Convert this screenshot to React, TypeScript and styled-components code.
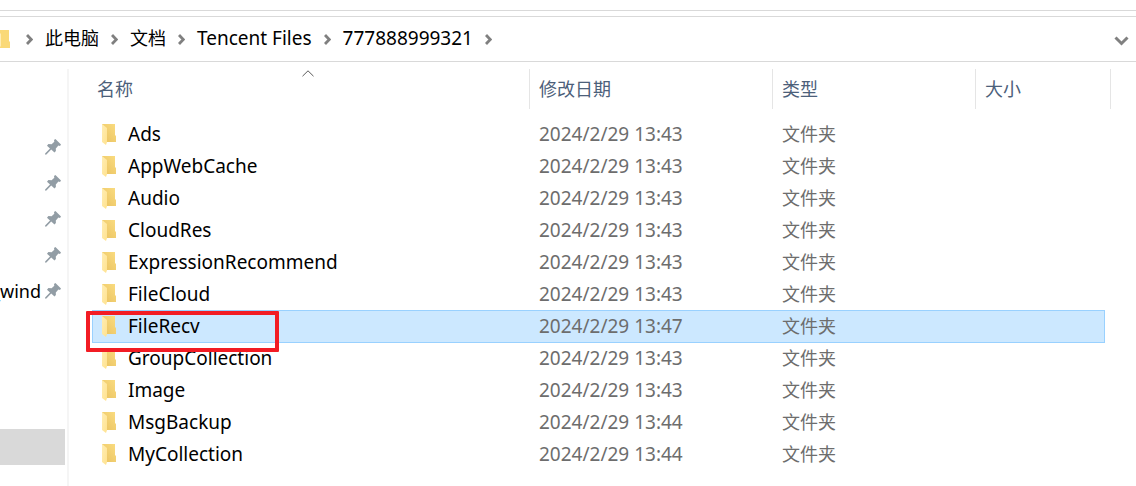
import React from "react";
import styled, { createGlobalStyle, css } from "styled-components";

const GlobalStyle = createGlobalStyle`
  * { box-sizing: border-box; }
  body {
    margin: 0;
    background: #fff;
    color: #000;
    font: 19px/24px "Noto Sans", "Noto Sans CJK SC", sans-serif;
    overflow: hidden;
  }
  button {
    border: 0;
    padding: 0;
    background: none;
    font: inherit;
    color: inherit;
    cursor: pointer;
  }
`;

const Window = styled.div`
  display: flex;
  flex-direction: column;
  min-height: 100vh;
  padding-top: 10px;
`;

const RibbonEdge = styled.div`
  height: 6px;
  border-top: 1px solid #d9d9d9;
`;

const AddressBar = styled.header`
  display: flex;
  align-items: center;
  justify-content: space-between;
  height: 46px;
  padding-right: 7px;
  border: solid #d9d9d9;
  border-width: 1px 0;
`;

const Crumbs = styled.nav`
  display: flex;
  align-items: center;
  gap: 12px;

  svg { flex: none; }
`;

const Crumb = styled.button<{ $cjk?: boolean }>`
  padding-bottom: 2px;
  font-size: ${(p) => (p.$cjk ? 18 : 19)}px;
  white-space: nowrap;
`;

const RootIcon = styled.span`
  display: flex;
  width: 14px;
`;

const Body = styled.div`
  display: flex;
  flex: 1;
  padding-top: 7px;
`;

const Sidebar = styled.aside`
  flex: none;
  width: 69px;
  padding-top: 60px;
  border-right: 2px solid #f5f5f5;
`;

const PinnedList = styled.ul`
  margin: 0 0 120px;
  padding: 0;
  list-style: none;
`;

const PinnedItem = styled.li`
  display: flex;
  align-items: center;
  justify-content: flex-end;
  gap: 4px;
  height: 36px;
  padding-right: 6px;
  overflow: hidden;
  font-size: 18px;

  svg { flex: none; }
`;

const ActiveItem = styled.div`
  width: 65px;
  height: 36px;
  background: #d9d9d9;
`;

const Main = styled.main`
  flex: 1;
  min-width: 0;
  padding: 0 25px 0 18px;
`;

const FileTable = styled.table`
  width: 100%;
  table-layout: fixed;
  border-collapse: separate;
  border-spacing: 0;
`;

const Col = styled.col<{ $width?: number }>`
  ${(p) => p.$width && css`width: ${p.$width}px;`}
`;

const HeadCell = styled.th`
  padding: 0 0 9px;
  font-weight: 400;
  text-align: left;
`;

const SortButton = styled.button<{ $first: boolean }>`
  position: relative;
  display: block;
  width: 100%;
  height: 40px;
  padding-left: ${(p) => (p.$first ? 10 : 9)}px;
  border-right: 1px solid #e5e5e5;
  color: #4c607a;
  font-size: 18px;
  text-align: left;
`;

const SortMark = styled.svg`
  position: absolute;
  top: 1px;
  left: calc(50% - 6px);
`;

const Cell = styled.td`
  height: 32px;
  padding: 0 0 0 9px;
  color: #6d6d6d;
  white-space: nowrap;
`;

const NameCell = styled(Cell)`
  position: relative;
  padding-left: 10px;
  color: #000;
`;

const TypeCell = styled(Cell)`
  font-size: 18px;
`;

const Gutter = styled.td`
  padding: 0;
`;

const Row = styled.tr<{ $selected: boolean }>`
  ${(p) =>
    p.$selected &&
    css`
      ${Cell} {
        background: #cce8ff;
        box-shadow: inset 0 1px #99d1ff, 0 1px #99d1ff;
      }
      ${NameCell} {
        box-shadow: inset 1px 1px #99d1ff, 0 1px #99d1ff;
      }
      ${Cell}:nth-last-child(2) {
        box-shadow: inset -1px 1px #99d1ff, 0 1px #99d1ff;
      }
    `}
`;

const FileName = styled.span`
  display: flex;
  align-items: center;
  gap: 12px;
`;

const Highlight = styled.span`
  position: absolute;
  z-index: 1;
  top: 1px;
  left: -6px;
  width: 193px;
  height: 41px;
  border: 4px solid #f21c24;
  border-radius: 1px;
  pointer-events: none;
`;

const FolderIcon = () => (
  <svg width="14" height="21" viewBox="0 0 14 21" aria-hidden="true">
    <defs>
      <linearGradient id="back" x1="0" x2="1" y1="1" y2="0">
        <stop offset="0" stopColor="#e9c160" />
        <stop offset="1" stopColor="#fadc80" />
      </linearGradient>
      <linearGradient id="flap" x1="0" x2="1" y1="0" y2="1">
        <stop offset="0" stopColor="#ffedb3" />
        <stop offset="1" stopColor="#ffe28f" />
      </linearGradient>
    </defs>
    <path d="M0 0H13V11L14 12V18H4L0 15Z" fill="url(#back)" />
    <path d="M0 0L5 4V18L4 21L0 18Z" fill="url(#flap)" />
  </svg>
);

const RootFolderIcon = () => (
  <svg width="10" height="18" viewBox="0 0 10 18" aria-hidden="true">
    <path d="M0 0H9V11L10 12V18H0Z" fill="#fad978" />
    <path d="M0 3L1 4V16L0 17Z" fill="#ffedb5" />
  </svg>
);

const CrumbArrow = () => (
  <svg width="7" height="11" viewBox="0 0 7 11" aria-hidden="true">
    <path d="M1 1L5.3 5.5L1 10" fill="none" stroke="#808080" strokeWidth="2.8" />
  </svg>
);

const PinIcon = () => (
  <svg width="16" height="16" viewBox="0 0 16 16" aria-hidden="true">
    <path
      d="M10.4 0L16 5.6L15 7L13.4 6.6L10.8 9.5L10.9 12L9.5 13.4L6.2 10.5L1.4 15.6L0.3 15.8L0.1 14.6L5 9.6L2 6.7L3.4 5L6.6 5.3L9.3 2.7L9 1Z"
      fill="#929da5"
    />
  </svg>
);

const pinned = ["", "", "", "", "_wind"];

const columns = ["名称", "修改日期", "类型", "大小"];

const files = [
  { name: "Ads", date: "2024/2/29 13:43" },
  { name: "AppWebCache", date: "2024/2/29 13:43" },
  { name: "Audio", date: "2024/2/29 13:43" },
  { name: "CloudRes", date: "2024/2/29 13:43" },
  { name: "ExpressionRecommend", date: "2024/2/29 13:43" },
  { name: "FileCloud", date: "2024/2/29 13:43" },
  { name: "FileRecv", date: "2024/2/29 13:47", selected: true },
  { name: "GroupCollection", date: "2024/2/29 13:43" },
  { name: "Image", date: "2024/2/29 13:43" },
  { name: "MsgBackup", date: "2024/2/29 13:44" },
  { name: "MyCollection", date: "2024/2/29 13:44" },
];

export default function App() {
  return (
    <>
      <GlobalStyle />
      <Window>
        <RibbonEdge />
        <AddressBar>
          <Crumbs>
            <RootIcon>
              <RootFolderIcon />
            </RootIcon>
            <CrumbArrow />
            <Crumb $cjk>此电脑</Crumb>
            <CrumbArrow />
            <Crumb $cjk>文档</Crumb>
            <CrumbArrow />
            <Crumb>Tencent Files</Crumb>
            <CrumbArrow />
            <Crumb>777888999321</Crumb>
            <CrumbArrow />
          </Crumbs>
          <button aria-label="展开">
            <svg width="15" height="10" viewBox="0 0 15 10" aria-hidden="true">
              <path d="M1.5 1.5L7.5 7.5L13.5 1.5" fill="none" stroke="#808080" strokeWidth="3" />
            </svg>
          </button>
        </AddressBar>
        <Body>
          <Sidebar>
            <PinnedList>
              {pinned.map((label, i) => (
                <PinnedItem key={i}>
                  {label && <span>{label}</span>}
                  <PinIcon />
                </PinnedItem>
              ))}
            </PinnedList>
            <ActiveItem />
          </Sidebar>
          <Main>
            <FileTable>
              <colgroup>
                <Col $width={5} />
                <Col />
                <Col $width={243} />
                <Col $width={203} />
                <Col $width={129} />
                <Col $width={6} />
              </colgroup>
              <thead>
                <tr>
                  {columns.map((label, i) => (
                    <HeadCell key={label} scope="col" colSpan={i === 0 || i === 3 ? 2 : 1}>
                      <SortButton $first={i === 0}>
                        {label}
                        {i === 0 && (
                          <SortMark width="12" height="7" viewBox="0 0 12 7" aria-hidden="true">
                            <path d="M0.5 6.2L6 0.8L11.5 6.2" fill="none" stroke="#5a5a5a" />
                          </SortMark>
                        )}
                      </SortButton>
                    </HeadCell>
                  ))}
                </tr>
              </thead>
              <tbody>
                {files.map((file) => (
                  <Row key={file.name} $selected={!!file.selected}>
                    <Gutter />
                    <NameCell>
                      <FileName>
                        <FolderIcon />
                        {file.name}
                      </FileName>
                      {file.selected && <Highlight />}
                    </NameCell>
                    <Cell>{file.date}</Cell>
                    <TypeCell>文件夹</TypeCell>
                    <Cell />
                    <Gutter />
                  </Row>
                ))}
              </tbody>
            </FileTable>
          </Main>
        </Body>
      </Window>
    </>
  );
}
